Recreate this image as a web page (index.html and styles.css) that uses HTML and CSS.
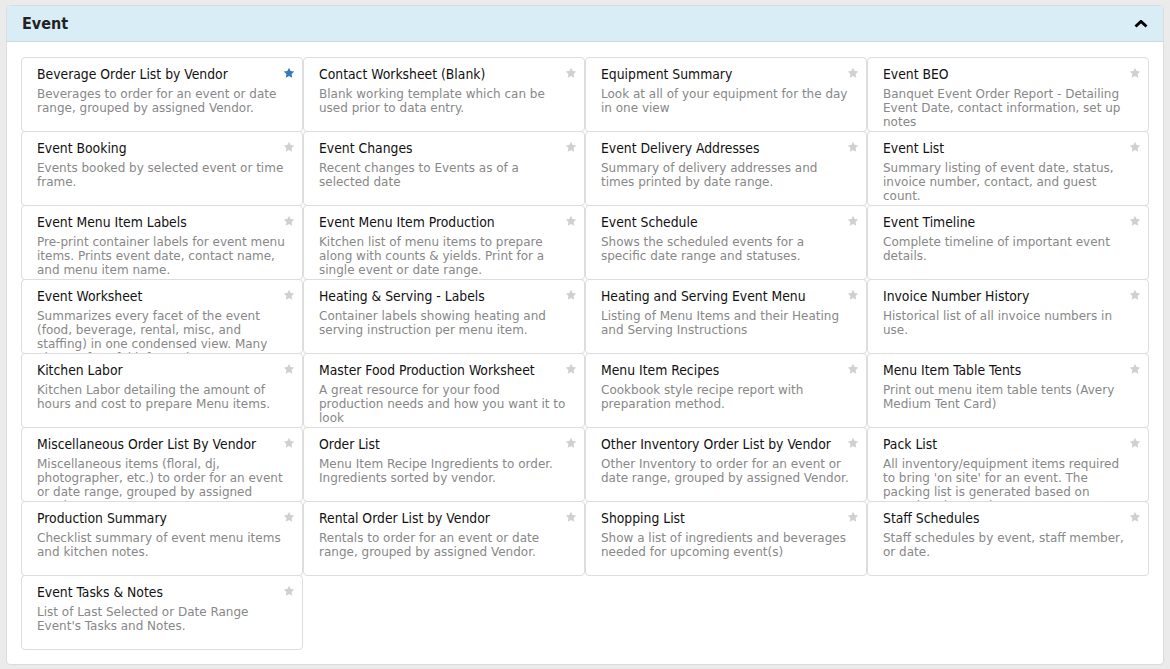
FILE: index.html
```html
<!DOCTYPE html>
<html lang="en">
<head>
  <meta charset="UTF-8" />
  <title>Reports - Event</title>
  <link rel="stylesheet" href="styles.css">
</head>
<body>

  <div class="panel">
    <div class="panel-heading">
      <h4>Event</h4>
      <svg class="chevron" viewBox="0 0 14 8" width="14" height="8">
        <polyline points="1.5,6.5 7,1.5 12.5,6.5" />
      </svg>
    </div>

    <div class="panel-body">
      <div class="reportes" id="reportes"></div>
    </div>
  </div>

  <script>
    // Lista de reportes: [titulo, descripcion, favorito]
    const reportes = [
      ["Beverage Order List by Vendor", "Beverages to order for an event or date range, grouped by assigned Vendor.", true],
      ["Contact Worksheet (Blank)", "Blank working template which can be used prior to data entry."],
      ["Equipment Summary", "Look at all of your equipment for the day in one view"],
      ["Event BEO", "Banquet Event Order Report - Detailing Event Date, contact information, set up notes"],
      ["Event Booking", "Events booked by selected event or time frame."],
      ["Event Changes", "Recent changes to Events as of a selected date"],
      ["Event Delivery Addresses", "Summary of delivery addresses and times printed by date range."],
      ["Event List", "Summary listing of event date, status, invoice number, contact, and guest count."],
      ["Event Menu Item Labels", "Pre-print container labels for event menu items. Prints event date, contact name, and menu item name."],
      ["Event Menu Item Production", "Kitchen list of menu items to prepare along with counts & yields. Print for a single event or date range."],
      ["Event Schedule", "Shows the scheduled events for a specific date range and statuses."],
      ["Event Timeline", "Complete timeline of important event details."],
      ["Event Worksheet", "Summarizes every facet of the event (food, beverage, rental, misc, and staffing) in one condensed view. Many pieces of useful information."],
      ["Heating & Serving - Labels", "Container labels showing heating and serving instruction per menu item."],
      ["Heating and Serving Event Menu", "Listing of Menu Items and their Heating and Serving Instructions"],
      ["Invoice Number History", "Historical list of all invoice numbers in use."],
      ["Kitchen Labor", "Kitchen Labor detailing the amount of hours and cost to prepare Menu items."],
      ["Master Food Production Worksheet", "A great resource for your food production needs and how you want it to look"],
      ["Menu Item Recipes", "Cookbook style recipe report with preparation method."],
      ["Menu Item Table Tents", "Print out menu item table tents (Avery Medium Tent Card)"],
      ["Miscellaneous Order List By Vendor", "Miscellaneous items (floral, dj, photographer, etc.) to order for an event or date range, grouped by assigned Vendor."],
      ["Order List", "Menu Item Recipe Ingredients to order. Ingredients sorted by vendor."],
      ["Other Inventory Order List by Vendor", "Other Inventory to order for an event or date range, grouped by assigned Vendor."],
      ["Pack List", "All inventory/equipment items required to bring 'on site' for an event. The packing list is generated based on associated menu items."],
      ["Production Summary", "Checklist summary of event menu items and kitchen notes."],
      ["Rental Order List by Vendor", "Rentals to order for an event or date range, grouped by assigned Vendor."],
      ["Shopping List", "Show a list of ingredients and beverages needed for upcoming event(s)"],
      ["Staff Schedules", "Staff schedules by event, staff member, or date."],
      ["Event Tasks & Notes", "List of Last Selected or Date Range Event's Tasks and Notes."]
    ];

    const contenedor = document.getElementById('reportes');
    const estrella = '<svg viewBox="0 0 24 24" width="12" height="12"><polygon points="12,1.5 15.2,8.1 22.5,9.1 17.2,14.2 18.5,21.5 12,18 5.5,21.5 6.8,14.2 1.5,9.1 8.8,8.1"/></svg>';

    reportes.forEach(([titulo, desc, fav]) => {
      const div = document.createElement('a');
      div.className = 'reporte';
      div.innerHTML = `
        <span class="estrella${fav ? ' activa' : ''}">${estrella}</span>
        <h5></h5>
        <p></p>`;
      div.querySelector('h5').textContent = titulo;
      div.querySelector('p').textContent = desc;
      contenedor.appendChild(div);
    });
  </script>
</body>
</html>
```

FILE: styles.css
```css
/* --------- Base --------- */
body { margin:0; padding:5px 6px; background:#ebebeb; font-family:"DejaVu Sans", Verdana, sans-serif }

/* --------- Panel --------- */
.panel { background:#fff; border:1px solid #dcdcdc; border-radius:4px; }
.panel-heading {
  display:flex; align-items:center; justify-content:space-between;
  height:35px; padding:0 15px;
  background:#d9edf7; border-bottom:1px solid #d0d7db;
  border-radius:3px 3px 0 0;
}
.panel-heading h4 {
  margin:0; font-family:"DejaVu Sans Condensed", "Liberation Sans", sans-serif;
  font-size:16px; font-weight:bold; color:#222
}
.chevron { fill:none; stroke:#000; stroke-width:3; margin-right:0 }
.panel-body { padding:15px 14px 15px }

/* --------- Reportes --------- */
.reportes { display:grid; grid-template-columns:repeat(4, 282px); }
.reporte {
  position:relative; display:block; box-sizing:border-box;
  height:75px; margin-bottom:-1px; padding:7px 16.5px 0 15px;
  border:1px solid #ddd; border-radius:4px;
  overflow:hidden; text-decoration:none; cursor:pointer
}
.reporte h5 {
  margin:0 0 4px; font-family:"DejaVu Sans Condensed", "Liberation Sans", sans-serif;
  font-size:13.8px; line-height:18px; font-weight:normal; color:#111
}
.reporte p { margin:0; font-size:12px; line-height:14px; color:#888 }
.estrella { position:absolute; top:9px; right:7px; line-height:0 }
.estrella svg { fill:#d0d0d0 }
.estrella.activa svg { fill:#337ab7 }
```
